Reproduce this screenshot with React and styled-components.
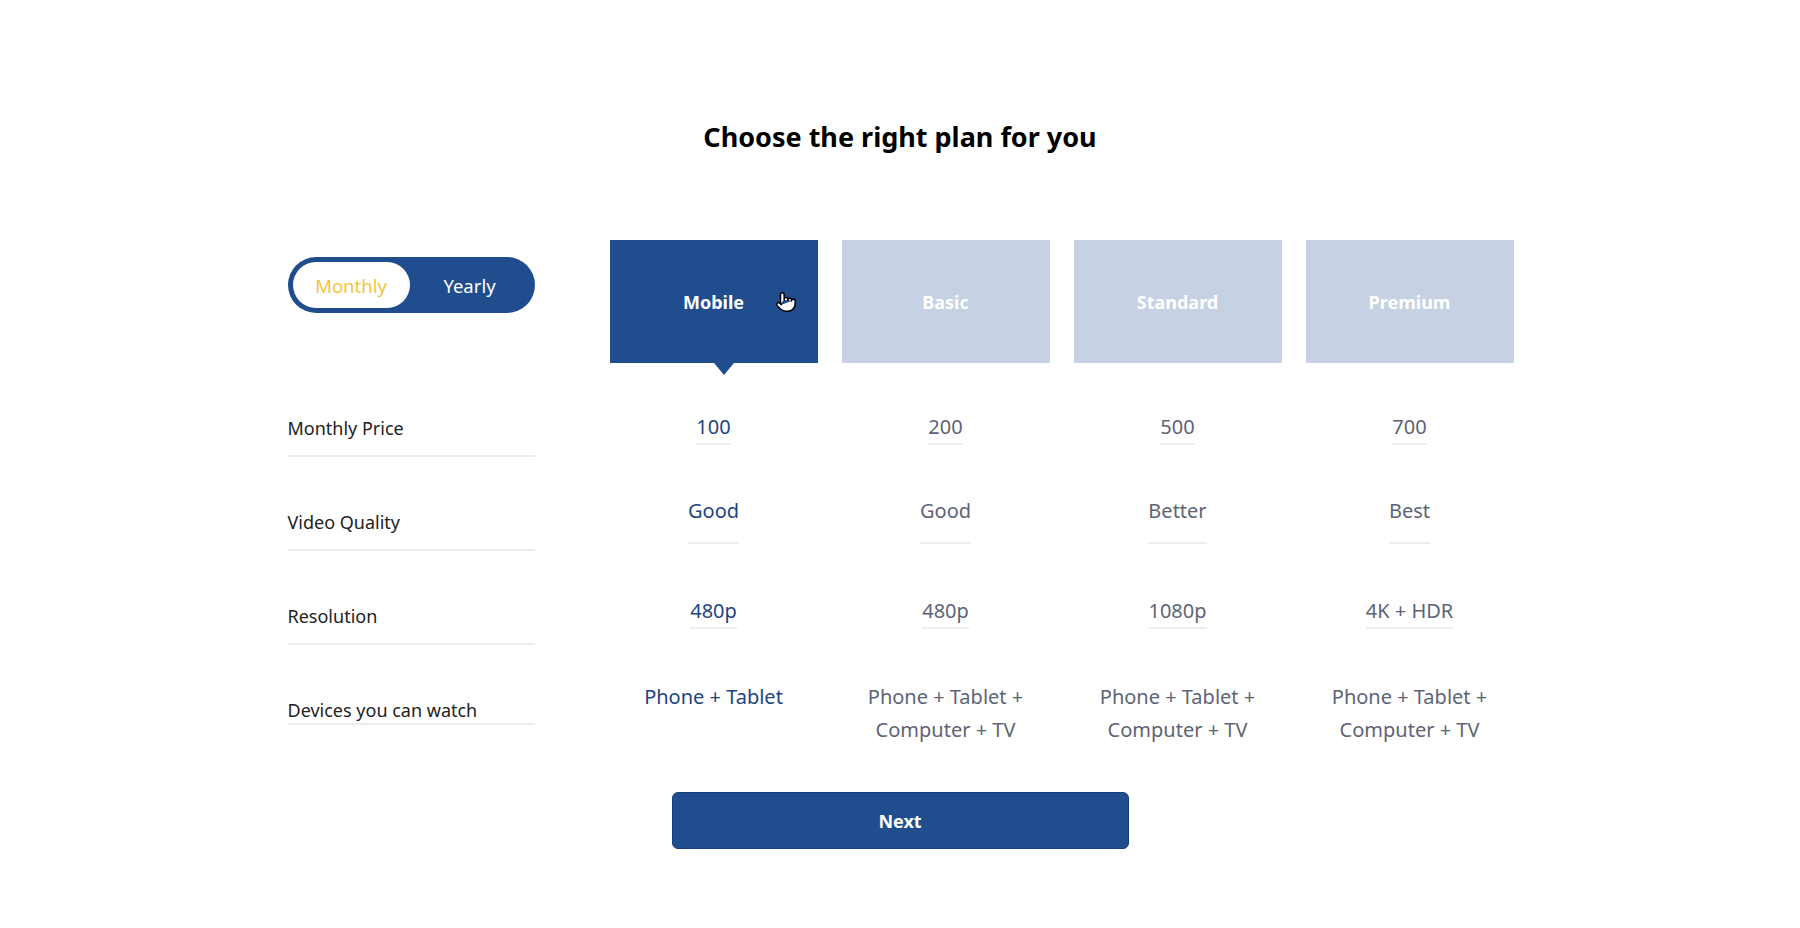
import React, { useState } from 'react';
import styled, { createGlobalStyle } from 'styled-components';
import { Pointer } from 'lucide-react';

const GlobalStyle = createGlobalStyle`
  body {
    margin: 0;
    background: #fff;
    font-family: "Noto Sans", "Open Sans", Arial, sans-serif;
  }
`;

const Page = styled.div`
  padding-top: 121px;
  padding-bottom: 60px;
`;

const Title = styled.h1`
  margin: 0;
  text-align: center;
  font-size: 27px;
  line-height: 32px;
  font-weight: 700;
  color: #000;
`;

const Table = styled.div`
  width: 1226px;
  margin: 87px auto 0;
  padding-left: 1px;
`;

const Row = styled.div`
  display: grid;
  grid-template-columns: 298px repeat(4, 208px);
  column-gap: 24px;
  align-items: start;
`;

const Toggle = styled.div`
  margin-top: 17px;
  width: 247px;
  height: 56px;
  box-sizing: border-box;
  padding: 5px;
  border-radius: 28px;
  background: #1f4d8e;
  display: flex;
  align-items: center;
`;

const ToggleOption = styled.button`
  border: none;
  cursor: pointer;
  height: 46px;
  border-radius: 23px;
  font-family: inherit;
  font-size: 18.5px;
  padding: 0;
  width: ${(p) => (p.$active ? '117px' : 'auto')};
  flex: ${(p) => (p.$active ? 'none' : '1')};
  background: ${(p) => (p.$active ? '#fff' : 'transparent')};
  color: ${(p) => (p.$active ? '#f5c43c' : '#fff')};
`;

const PlanCard = styled.div`
  position: relative;
  height: 123px;
  display: flex;
  align-items: center;
  justify-content: center;
  background: ${(p) => (p.$active ? '#1f4d8e' : '#c6d1e3')};
  color: #fff;
  font-size: 18px;
  font-weight: 700;
  cursor: pointer;

  ${(p) =>
    p.$active &&
    `
    &::after {
      content: '';
      position: absolute;
      top: 100%;
      left: 50%;
      border-left: 10px solid transparent;
      border-right: 10px solid transparent;
      border-top: 12px solid #1f4d8e;
    }
  `}
`;

const Cursor = styled.span`
  position: absolute;
  left: 165px;
  top: 51px;
  display: flex;
`;

const Label = styled.div`
  width: 247px;
  margin-top: 53px;
  padding-bottom: ${(p) => (p.$last ? '1px' : '15px')};
  border-bottom: 2px solid #ececec;
  font-size: 18px;
  line-height: 24px;
  color: #222;
`;

const Cell = styled.div`
  margin-top: ${(p) => p.$offset}px;
  text-align: center;
  font-size: 20px;
  line-height: ${(p) => (p.$wrap ? '33px' : '28px')};
  color: ${(p) => (p.$active ? '#1d4583' : '#5d6476')};
`;

const Value = styled.span`
  display: inline-block;
  padding-bottom: ${(p) => p.$pad}px;
  border-bottom: ${(p) => (p.$plain ? 'none' : '2px solid #eceef1')};
`;

const NextButton = styled.button`
  display: block;
  margin: 46px auto 0;
  width: 457px;
  height: 57px;
  border: 1px solid #173f78;
  border-radius: 6px;
  background: #1f4d8e;
  color: #fff;
  font-family: inherit;
  font-size: 18px;
  font-weight: 700;
  cursor: pointer;
`;

const plans = [
  { name: 'Mobile', price: '100', quality: 'Good', resolution: '480p', devices: 'Phone + Tablet' },
  { name: 'Basic', price: '200', quality: 'Good', resolution: '480p', devices: 'Phone + Tablet + Computer + TV' },
  { name: 'Standard', price: '500', quality: 'Better', resolution: '1080p', devices: 'Phone + Tablet + Computer + TV' },
  { name: 'Premium', price: '700', quality: 'Best', resolution: '4K + HDR', devices: 'Phone + Tablet + Computer + TV' },
];

const rows = [
  { label: 'Monthly Price', key: 'price', offset: 50, pad: 2 },
  { label: 'Video Quality', key: 'quality', offset: 40, pad: 17 },
  { label: 'Resolution', key: 'resolution', offset: 46, pad: 2 },
  { label: 'Devices you can watch', key: 'devices', offset: 35, pad: 0, last: true },
];

const App = () => {
  const [period, setPeriod] = useState('monthly');
  const [selected, setSelected] = useState('Mobile');

  return (
    <Page>
      <GlobalStyle />
      <Title>Choose the right plan for you</Title>
      <Table>
        <Row>
          <Toggle>
            <ToggleOption $active={period === 'monthly'} onClick={() => setPeriod('monthly')}>
              Monthly
            </ToggleOption>
            <ToggleOption $active={period === 'yearly'} onClick={() => setPeriod('yearly')}>
              Yearly
            </ToggleOption>
          </Toggle>
          {plans.map((plan) => (
            <PlanCard
              key={plan.name}
              $active={selected === plan.name}
              onClick={() => setSelected(plan.name)}
            >
              {plan.name}
              {plan.name === 'Mobile' && (
                <Cursor>
                  <Pointer size={22} fill="#fff" color="#000" strokeWidth={1.6} />
                </Cursor>
              )}
            </PlanCard>
          ))}
        </Row>
        {rows.map((row) => (
          <Row key={row.key}>
            <Label $last={row.last}>{row.label}</Label>
            {plans.map((plan) => (
              <Cell
                key={plan.name}
                $offset={row.offset}
                $wrap={row.last}
                $active={selected === plan.name}
              >
                <Value $pad={row.pad} $plain={row.last}>
                  {plan[row.key]}
                </Value>
              </Cell>
            ))}
          </Row>
        ))}
      </Table>
      <NextButton>Next</NextButton>
    </Page>
  );
};

export default App;
